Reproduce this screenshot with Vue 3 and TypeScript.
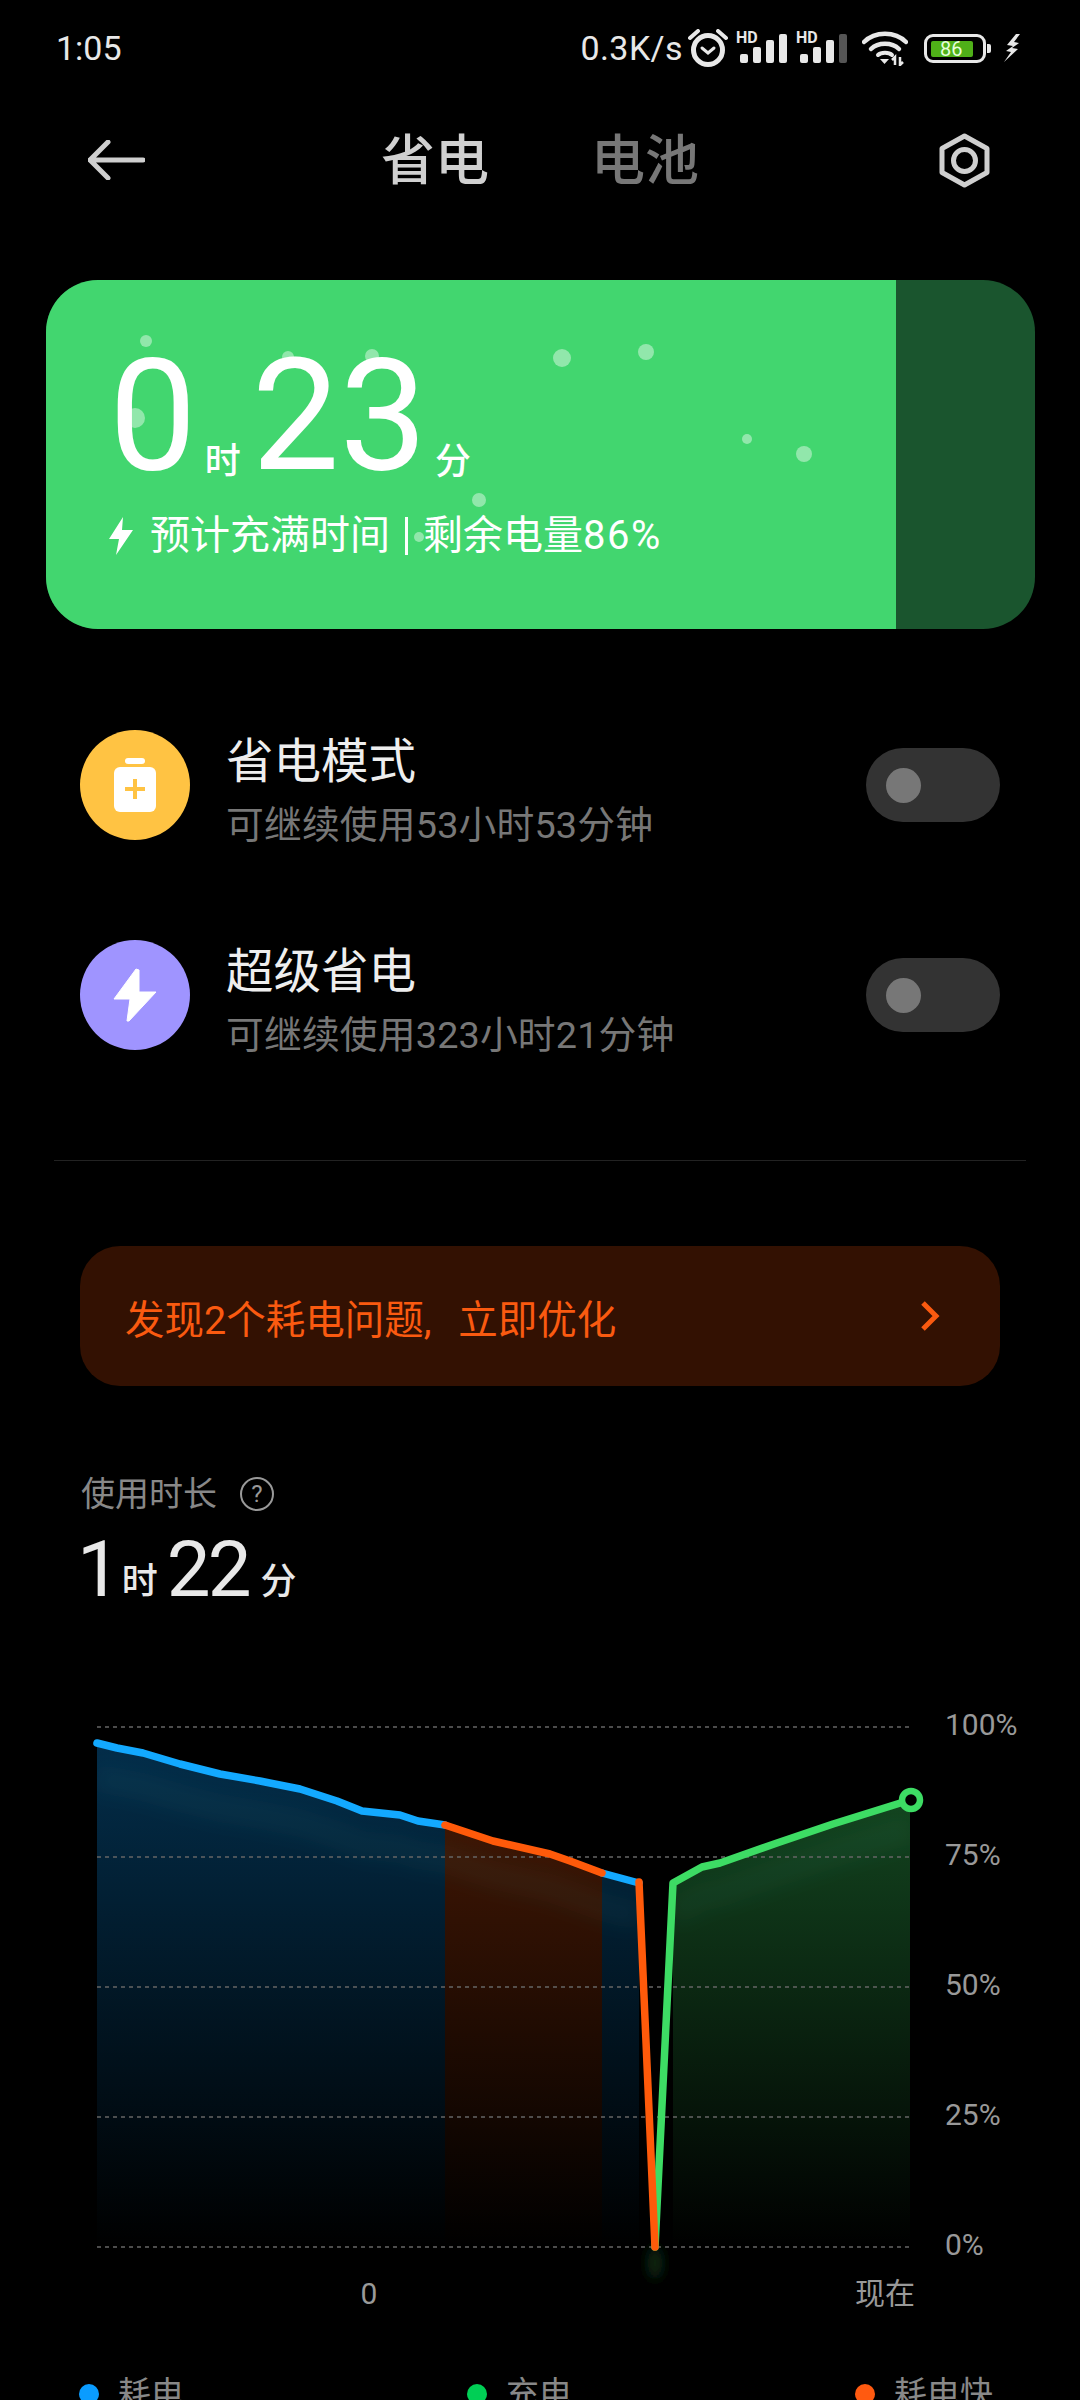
<script setup lang="ts">
type Pt = [number, number];

const toPath = (pts: Pt[]) => pts.map((p) => p.join(',')).join(' ');

const blue1: Pt[] = [[97, 1742], [117, 1747], [143, 1752], [180, 1763], [220, 1773], [260, 1780], [300, 1788], [337, 1800], [362, 1810], [400, 1814], [418, 1820], [445, 1824]];
const orange1: Pt[] = [[445, 1824], [493, 1840], [550, 1853], [570, 1860], [602, 1872]];
const blue2: Pt[] = [[602, 1872], [639, 1882]];
const drop: Pt[] = [[639, 1881], [655, 2246]];
const green: Pt[] = [[655, 2246], [673, 1882], [702, 1866], [720, 1862], [777, 1842], [833, 1823], [910, 1799]];

const baseY = 2246;
const area = (pts: Pt[]) => {
  const first = pts[0];
  const last = pts[pts.length - 1];
  return toPath([[first[0], baseY], ...pts, [last[0], baseY]]);
};

const gridLines = [
  { y: 1726, label: '100%' },
  { y: 1856, label: '75%' },
  { y: 1986, label: '50%' },
  { y: 2116, label: '25%' },
  { y: 2246, label: '0%' },
];

const bubbles = [
  { x: 146, y: 341, r: 6 },
  { x: 135, y: 418, r: 10 },
  { x: 288, y: 357, r: 6 },
  { x: 372, y: 356, r: 7 },
  { x: 562, y: 358, r: 9 },
  { x: 646, y: 352, r: 8 },
  { x: 747, y: 439, r: 5 },
  { x: 804, y: 454, r: 8 },
  { x: 479, y: 500, r: 7 },
  { x: 419, y: 537, r: 5 },
];

const bubbleStyle = (b: { x: number; y: number; r: number }) => ({
  left: `${b.x - 46 - b.r}px`,
  top: `${b.y - 280 - b.r}px`,
  width: `${b.r * 2}px`,
  height: `${b.r * 2}px`,
});

const signalBars = [
  { x: 1, h: 9 },
  { x: 14, h: 16 },
  { x: 27, h: 23 },
  { x: 40, h: 29 },
];
</script>

<template>
  <div class="page">
    <div class="status">
      <span class="time">1:05</span>
      <div class="status-right">
        <span class="speed">0.3K/s</span>
        <svg class="alarm" width="40" height="38" viewBox="0 0 40 38">
          <circle cx="20" cy="21" r="14.5" fill="none" stroke="#e8e8e8" stroke-width="5" />
          <path d="M14 19l6 5 6-5" fill="none" stroke="#e8e8e8" stroke-width="3" stroke-linecap="round" />
          <path d="M2 9L10 2M38 9L30 2" stroke="#e8e8e8" stroke-width="4" stroke-linecap="round" />
        </svg>
        <div v-for="n in 2" :key="n" class="signal">
          <span class="hd">HD</span>
          <svg width="49" height="30" viewBox="0 0 49 30">
            <rect
              v-for="(bar, i) in signalBars"
              :key="i"
              :x="bar.x"
              :y="30 - bar.h"
              width="8"
              :height="bar.h"
              rx="2"
              :fill="n === 2 && i === 3 ? '#555' : '#e8e8e8'"
            />
          </svg>
        </div>
        <svg class="wifi" width="46" height="36" viewBox="0 0 46 36">
          <path d="M2 12C13 1 33 1 44 12" fill="none" stroke="#e8e8e8" stroke-width="4.5" stroke-linecap="round" />
          <path d="M9 19C16 12 30 12 37 19" fill="none" stroke="#e8e8e8" stroke-width="4.5" stroke-linecap="round" />
          <path d="M16 25C19 22 27 22 30 25" fill="none" stroke="#e8e8e8" stroke-width="4" stroke-linecap="round" />
          <path d="M18 29h9l-4.500 5z" fill="#e8e8e8" />
          <path d="M33 35v-8l-3 3M38 27v8l3-3" fill="none" stroke="#e8e8e8" stroke-width="2.500" />
        </svg>
        <div class="battery">
          <div class="battery-body">
            <div class="battery-fill">86</div>
          </div>
          <span class="battery-nub" />
        </div>
        <svg class="charge" width="18" height="29" viewBox="0 0 18 29">
          <path d="M12 0L3 11l6 1-7 5 5 1-7 10 14-13-6-1 7-5-5-1 6-8z" fill="#e8e8e8" />
        </svg>
      </div>
    </div>

    <div class="nav">
      <svg class="back" width="57" height="40" viewBox="0 0 57 40">
        <path d="M20 2L2 20l18 18M2 20h53" fill="none" stroke="#cfcfcf" stroke-width="5" stroke-linecap="round" stroke-linejoin="round" />
      </svg>
      <div class="tabs">
        <span class="tab active">省电</span>
        <span class="tab">电池</span>
      </div>
      <svg class="gear" width="51" height="55" viewBox="0 0 51 55">
        <path d="M25.500 3L48 15.500v24L25.500 52 3 39.500v-24z" fill="none" stroke="#cfcfcf" stroke-width="5" stroke-linejoin="round" />
        <circle cx="25.500" cy="27.500" r="11" fill="none" stroke="#cfcfcf" stroke-width="5" />
      </svg>
    </div>

    <div class="card">
      <div class="card-fill" />
      <span v-for="(b, i) in bubbles" :key="i" class="bubble" :style="bubbleStyle(b)" />
      <div class="card-content">
        <div class="big-time">
          <span class="big-num">0</span>
          <span class="big-unit">时</span>
          <span class="big-num second">23</span>
          <span class="big-unit">分</span>
        </div>
        <div class="card-sub">
          <svg width="26" height="38" viewBox="0 0 26 38">
            <path d="M15 0L1 22h10L8 38l17-25H14z" fill="#fff" />
          </svg>
          <span class="card-sub-text">预计充满时间<i class="sep" />剩余电量<span class="pct">86%</span></span>
        </div>
      </div>
    </div>

    <div class="modes">
      <div class="mode">
        <div class="mode-icon yellow">
          <svg width="42" height="54" viewBox="0 0 42 54">
            <rect x="11" y="0" width="20" height="6" rx="3" fill="#fff" />
            <rect x="0" y="9" width="42" height="45" rx="6" fill="#fff" />
            <path d="M21 21v20M11 31h20" stroke="#ffc343" stroke-width="4" />
          </svg>
        </div>
        <div class="mode-text">
          <div class="mode-title">省电模式</div>
          <div class="mode-sub">可继续使用53小时53分钟</div>
        </div>
        <div class="toggle"><span class="knob" /></div>
      </div>
      <div class="mode">
        <div class="mode-icon purple">
          <svg width="44" height="54" viewBox="0 0 44 54">
            <path d="M23 1L1 31h16l-3 22 2 0L43 24H26l0-22z" fill="#fff" stroke="#fff" stroke-width="1" stroke-linejoin="round" />
          </svg>
        </div>
        <div class="mode-text">
          <div class="mode-title">超级省电</div>
          <div class="mode-sub">可继续使用323小时21分钟</div>
        </div>
        <div class="toggle"><span class="knob" /></div>
      </div>
    </div>

    <div class="divider" />

    <div class="banner">
      <span class="banner-text">发现2个耗电问题, 立即优化</span>
      <svg width="20" height="30" viewBox="0 0 20 30">
        <path d="M3 2l13 13L3 28" fill="none" stroke="#fa5a10" stroke-width="5" />
      </svg>
    </div>

    <div class="usage-label">
      <span>使用时长</span>
      <svg width="36" height="36" viewBox="0 0 36 36">
        <circle cx="18" cy="18" r="16" fill="none" stroke="#999" stroke-width="2" />
        <text x="18" y="26" text-anchor="middle" class="help-mark">?</text>
      </svg>
    </div>
    <div class="usage-time">
      <span class="usage-num">1</span>
      <span class="usage-unit">时</span>
      <span class="usage-num second">22</span>
      <span class="usage-unit last">分</span>
    </div>

    <svg class="chart" width="1080" height="620" viewBox="0 1700 1080 620">
      <defs>
        <linearGradient id="fillBlue" gradientUnits="userSpaceOnUse" x1="0" y1="1726" x2="0" y2="2246">
          <stop offset="0" stop-color="#0a9cff" stop-opacity="0.3" />
          <stop offset="1" stop-color="#0a9cff" stop-opacity="0" />
        </linearGradient>
        <linearGradient id="fillOrange" gradientUnits="userSpaceOnUse" x1="0" y1="1726" x2="0" y2="2246">
          <stop offset="0" stop-color="#ff5a10" stop-opacity="0.3" />
          <stop offset="1" stop-color="#ff5a10" stop-opacity="0" />
        </linearGradient>
        <linearGradient id="fillGreen" gradientUnits="userSpaceOnUse" x1="0" y1="1726" x2="0" y2="2246">
          <stop offset="0" stop-color="#3ddc64" stop-opacity="0.36" />
          <stop offset="1" stop-color="#3ddc64" stop-opacity="0" />
        </linearGradient>
        <filter id="soft" x="-10%" y="-50%" width="120%" height="200%">
          <feGaussianBlur stdDeviation="9" />
        </filter>
        <filter id="spot" x="-100%" y="-100%" width="300%" height="300%">
          <feGaussianBlur stdDeviation="6" />
        </filter>
        <clipPath id="underLeft">
          <polygon :points="area([...blue1, ...orange1.slice(1), ...blue2.slice(1)])" />
        </clipPath>
        <clipPath id="underRight">
          <polygon :points="area(green.slice(1))" />
        </clipPath>
      </defs>

      <polygon :points="area(blue1)" fill="url(#fillBlue)" />
      <polygon :points="area(orange1)" fill="url(#fillOrange)" />
      <polygon :points="area(blue2)" fill="url(#fillBlue)" />
      <polygon :points="area(green.slice(1))" fill="url(#fillGreen)" />

      <g clip-path="url(#underLeft)">
        <polyline
          :points="toPath([...blue1, ...orange1.slice(1), ...blue2.slice(1)])"
          transform="translate(0 34)"
          class="band"
          filter="url(#soft)"
        />
      </g>
      <g clip-path="url(#underRight)">
        <polyline :points="toPath(green.slice(1))" transform="translate(0 30)" class="band" filter="url(#soft)" />
      </g>
      <ellipse cx="655" cy="2262" rx="7" ry="16" fill="#0c2a14" filter="url(#spot)" />

      <line
        v-for="g in gridLines"
        :key="g.y"
        x1="97"
        x2="913"
        :y1="g.y"
        :y2="g.y"
        class="grid"
      />

      <polyline :points="toPath(green)" class="line" stroke="#3ddc64" />
      <polyline :points="toPath(blue1)" class="line" stroke="#13a9ff" />
      <polyline :points="toPath(blue2)" class="line" stroke="#13a9ff" />
      <polyline :points="toPath(orange1)" class="line" stroke="#ff5a0a" />
      <polyline :points="toPath(drop)" class="line" stroke="#ff5a0a" />
      <circle cx="911" cy="1799" r="9" fill="#000" stroke="#3ddc64" stroke-width="6.500" />

      <text v-for="g in gridLines" :key="g.label" x="945" :y="g.y + 8" class="axis">{{ g.label }}</text>
      <text x="369" y="2303" text-anchor="middle" class="axis">0</text>
      <text x="885" y="2303" text-anchor="middle" class="axis">现在</text>
    </svg>

    <div class="legend">
      <div class="legend-item"><i class="dot" style="background: #0a9cff" />耗电</div>
      <div class="legend-item"><i class="dot" style="background: #00cf55" />充电</div>
      <div class="legend-item"><i class="dot" style="background: #ff5a10" />耗电快</div>
    </div>
  </div>
</template>

<style scoped>
.page {
  width: 1080px;
  height: 2400px;
  overflow: hidden;
  background: #000;
  color: #fff;
  font-family: Roboto, "Noto Sans CJK SC", sans-serif;
}

.status {
  display: flex;
  align-items: center;
  justify-content: space-between;
  height: 96px;
  padding: 0 58px 0 56px;
  color: #e8e8e8;
  font-size: 34px;
}
.status-right {
  display: flex;
  align-items: center;
}
.speed {
  letter-spacing: 0.4px;
}
.alarm {
  margin-left: 5px;
}
.signal {
  position: relative;
  width: 49px;
  height: 30px;
  margin-left: 11px;
}
.hd {
  position: absolute;
  left: -3px;
  top: -3px;
  font-size: 16px;
  font-weight: 700;
  line-height: 15px;
  background: #000;
  padding-right: 1px;
}
.signal svg {
  display: block;
}
.wifi {
  margin-left: 14px;
}
.battery {
  display: flex;
  align-items: center;
  margin-left: 16px;
}
.battery-body {
  width: 62px;
  height: 29px;
  padding: 4px;
  box-sizing: border-box;
  border: 3px solid #e8e8e8;
  border-radius: 9px;
}
.battery-fill {
  width: 42px;
  height: 16px;
  padding-left: 9px;
  box-sizing: border-box;
  background: #4fb018;
  border-radius: 2px;
  color: #e6ffd8;
  font-size: 20px;
  line-height: 16px;
}
.battery-nub {
  width: 4px;
  height: 9px;
  margin-left: 1px;
  background: #e8e8e8;
  border-radius: 0 2px 2px 0;
}
.charge {
  margin-left: 13px;
}

.nav {
  display: flex;
  align-items: center;
  justify-content: space-between;
  height: 128px;
  padding: 0 90px 0 88px;
}
.tabs {
  display: flex;
  gap: 102px;
  margin-left: -4px;
  padding-top: 4px;
}
.tab {
  color: #777;
  font-size: 54px;
  font-weight: 500;
  line-height: 60px;
}
.tab.active {
  color: #d0d0d0;
}

.card {
  position: relative;
  height: 349px;
  margin: 56px 45px 0 46px;
  overflow: hidden;
  background: #1a552e;
  border-radius: 52px;
}
.card-fill {
  width: 850px;
  height: 100%;
  background: #42d66f;
}
.bubble {
  position: absolute;
  background: rgba(255, 255, 255, 0.42);
  border-radius: 50%;
}
.card-content {
  position: absolute;
  inset: 0;
  padding: 70px 0 0 63px;
}
.big-time {
  display: flex;
  align-items: flex-end;
  height: 132px;
}
.big-num {
  font-size: 156px;
  font-weight: 400;
  line-height: 132px;
}
.big-num.second {
  margin-left: 11px;
}
.big-unit {
  margin-left: 8px;
  font-size: 36px;
  font-weight: 500;
  line-height: 40px;
}
.card-sub {
  display: flex;
  align-items: center;
  gap: 16px;
  margin-top: 30px;
  margin-left: -1px;
}
.card-sub-text {
  display: flex;
  align-items: center;
  font-size: 40px;
  line-height: 48px;
}
.pct {
  letter-spacing: 1.5px;
}
.sep {
  width: 3px;
  height: 38px;
  margin: 0 15px;
  background: #fff;
}

.modes {
  display: flex;
  flex-direction: column;
  gap: 100px;
  margin: 101px 80px 0;
}
.mode {
  display: flex;
  align-items: center;
  height: 110px;
}
.mode-icon {
  display: flex;
  flex: none;
  align-items: center;
  justify-content: center;
  width: 110px;
  height: 110px;
  border-radius: 50%;
}
.mode-icon.yellow {
  background: #ffc343;
}
.mode-icon.purple {
  background: #9f94ff;
}
.mode-text {
  flex: 1;
  margin-left: 36px;
  padding-top: 9px;
}
.mode-title {
  color: #eee;
  font-size: 47.5px;
  font-weight: 400;
  line-height: 60px;
}
.mode-sub {
  margin-top: 10px;
  color: #777;
  font-size: 37.8px;
  letter-spacing: 0.15px;
  line-height: 46px;
}
.toggle {
  width: 134px;
  height: 74px;
  padding-left: 20px;
  display: flex;
  align-items: center;
  box-sizing: border-box;
  background: #333;
  border-radius: 37px;
}
.knob {
  width: 35px;
  height: 35px;
  background: #777;
  border-radius: 50%;
}

.divider {
  height: 1px;
  margin: 110px 54px 0;
  background: #222;
}

.banner {
  display: flex;
  align-items: center;
  justify-content: space-between;
  height: 140px;
  margin: 85px 80px 0;
  padding: 0 60px 0 45px;
  background: #331102;
  border-radius: 40px;
  color: #fa5a10;
  font-size: 39.5px;
}
.banner-text {
  word-spacing: 17px;
}

.usage-label {
  display: flex;
  align-items: center;
  gap: 22px;
  margin: 88px 0 0 81px;
  color: #888;
  font-size: 34px;
  line-height: 40px;
}
.help-mark {
  fill: #999;
  font-size: 24px;
}
.usage-time {
  display: flex;
  align-items: flex-end;
  height: 64px;
  margin: 24px 0 0 77px;
  color: #e8e8e8;
}
.usage-num {
  font-size: 78px;
  line-height: 64px;
  letter-spacing: -3px;
}
.usage-num.second {
  margin-left: 9px;
}
.usage-unit {
  margin-left: 4px;
  font-size: 36px;
  font-weight: 500;
  line-height: 40px;
}
.usage-unit.last {
  margin-left: 12px;
}

.chart {
  display: block;
  margin-top: 99px;
}
.grid {
  stroke: #666;
  stroke-width: 1.5;
  stroke-dasharray: 4 4;
}
.line {
  fill: none;
  stroke-width: 7.5;
  stroke-linecap: round;
  stroke-linejoin: round;
}
.band {
  fill: none;
  stroke: #4fc8b0;
  stroke-opacity: 0.05;
  stroke-width: 28;
}
.axis {
  fill: #999;
  font-size: 30px;
}

.legend {
  display: flex;
  margin: 53px 0 0 79px;
  color: #888;
  font-size: 33px;
  line-height: 40px;
}
.legend-item {
  display: flex;
  flex: none;
  align-items: center;
  gap: 19px;
  width: 388px;
}
.dot {
  width: 20px;
  height: 20px;
  border-radius: 50%;
}
</style>

<style>
html,
body {
  background: #000;
}
</style>
